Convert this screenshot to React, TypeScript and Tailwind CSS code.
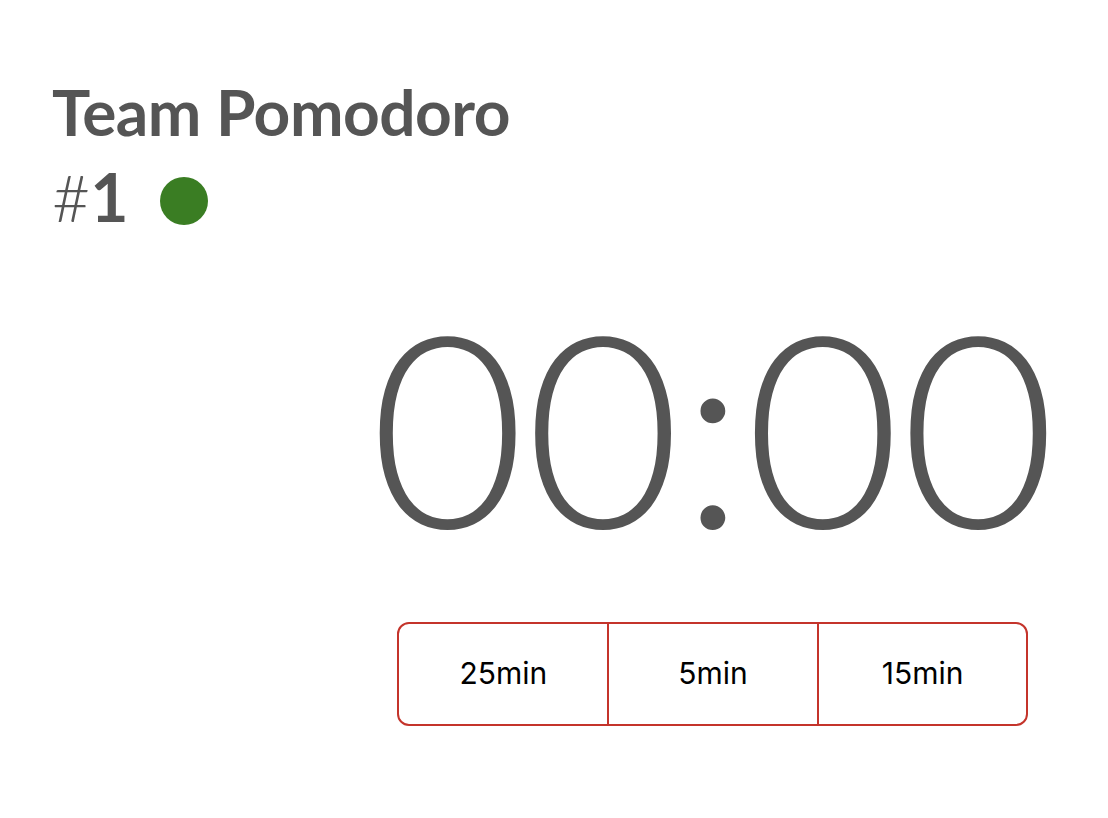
import React, { useState } from 'react';

const durations = ['25min', '5min', '15min'];

export default function App() {
  const [selected, setSelected] = useState<string | null>(null);

  return (
    <div className="min-h-screen w-full bg-white font-['Lato',sans-serif] text-[#555555]">
      <div className="px-[52px] pt-[77px]">
        {/* Header */}
        <h1 className="text-[64px] font-bold leading-[1.1] tracking-[-0.5px]">Team Pomodoro</h1>
        <div className="mt-[14px] flex items-center gap-[31px]">
          <div className="text-[66px] leading-[1.1]">
            <span className="font-light">#</span>
            <span className="font-bold">1</span>
          </div>
          <span className="mt-[6px] h-[48px] w-[48px] rounded-full bg-[#3a7d23]" />
        </div>
      </div>

      {/* Timer */}
      <div className="mt-[56px] flex justify-end pr-[52px]">
        <div className="flex flex-col items-center">
          <div className="text-[268px] font-light leading-none">00:00</div>
          <div className="mt-[64px] flex h-[104px] w-[631px] overflow-hidden rounded-[12px] border-2 border-[#c4342b]">
            {durations.map((d, i) => (
              <button
                key={d}
                onClick={() => setSelected(d)}
                className={`flex-1 font-['Inter',sans-serif] text-[30px] text-black ${
                  i > 0 ? 'border-l-2 border-[#c4342b]' : ''
                } ${selected === d ? 'bg-[#fbeaea]' : ''}`}
              >
                {d}
              </button>
            ))}
          </div>
        </div>
      </div>
    </div>
  );
}
